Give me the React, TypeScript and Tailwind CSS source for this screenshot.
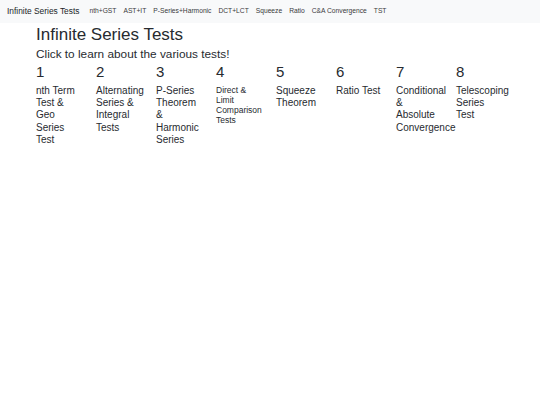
import React from "react";

const links = ["nth+GST", "AST+IT", "P-Series+Harmonic", "DCT+LCT", "Squeeze", "Ratio", "C&A Convergence", "TST"];

const cols: { n: string; lines: string[]; small?: boolean }[] = [
  { n: "1", lines: ["nth Term", "Test &", "Geo", "Series", "Test"] },
  { n: "2", lines: ["Alternating", "Series &", "Integral", "Tests"] },
  { n: "3", lines: ["P-Series", "Theorem", "&", "Harmonic", "Series"] },
  { n: "4", lines: ["Direct &", "Limit", "Comparison", "Tests"], small: true },
  { n: "5", lines: ["Squeeze", "Theorem"] },
  { n: "6", lines: ["Ratio Test"] },
  { n: "7", lines: ["Conditional", "&", "Absolute", "Convergence"] },
  { n: "8", lines: ["Telescoping", "Series", "Test"] },
];

export default function App() {
  return (
    <div className="w-[540px] h-[405px] bg-white text-[#272b30]" style={{ fontFamily: '"Liberation Sans", Arial, sans-serif' }}>
      <nav className="h-[23px] bg-[#f8f9fa] flex items-center pl-[7px]">
        <span className="text-[8.4px] leading-none text-[#212529] mr-[10px] whitespace-nowrap">Infinite Series Tests</span>
        <div className="flex gap-[7px]">
          {links.map((l) => (
            <span key={l} className="text-[6.7px] leading-none text-[#3a3a3a] whitespace-nowrap">{l}</span>
          ))}
        </div>
      </nav>
      <main className="pl-[36px]">
        <h1 className="text-[17px] leading-[20.4px] mt-[2px]">Infinite Series Tests</h1>
        <p className="text-[11.8px] leading-[14.4px] mt-[2px]">Click to learn about the various tests!</p>
        <div className="flex mt-[1px]">
          {cols.map((c) => (
            <div key={c.n} className="w-[60px] flex flex-col">
              <div className="text-[15px] leading-[18px]">{c.n}</div>
              <div className={c.small ? "mt-[4px] text-[8.5px] leading-[10px]" : "mt-[4px] text-[10px] leading-[12.25px]"}>
                {c.lines.map((ln, i) => (
                  <div key={i} className="whitespace-nowrap">{ln}</div>
                ))}
              </div>
            </div>
          ))}
        </div>
      </main>
    </div>
  );
}
